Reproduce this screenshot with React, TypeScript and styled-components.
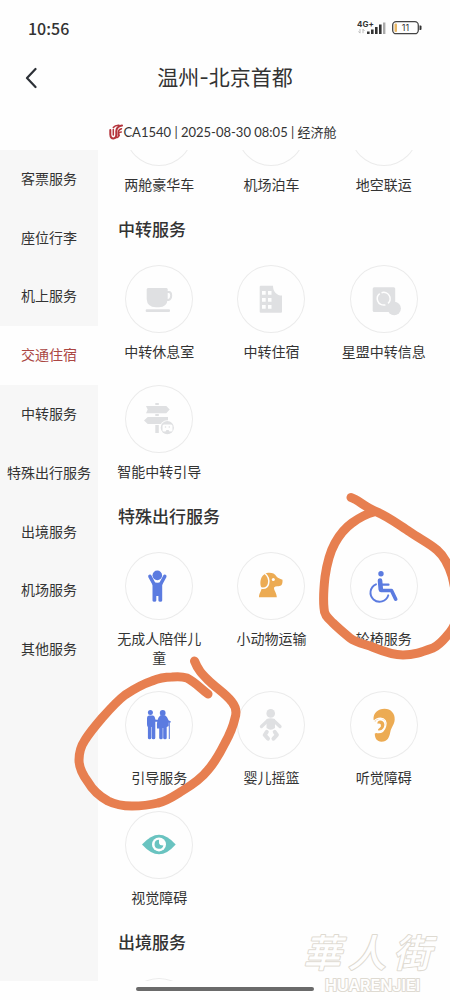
import React from "react";
import styled, { createGlobalStyle } from "styled-components";

const GlobalStyle = createGlobalStyle`
  *, *::before, *::after { box-sizing: border-box; }
  body {
    margin: 0;
    background: #fefefe;
    color: #333;
    font-family: "Noto Sans CJK SC", "Noto Sans", sans-serif;
  }
  button { font: inherit; color: inherit; background: none; border: 0; padding: 0; cursor: pointer; }
`;

const GREY = "#dfe0e2";
const BLUE = "#5b7be0";
const AMBER = "#ecab53";
const TEAL = "#69c3c0";

const Shell = styled.div`
  position: relative;
  display: flex;
  flex-direction: column;
  height: 100vh;
  overflow: hidden;
`;

const StatusBar = styled.div`
  display: flex;
  flex: none;
  align-items: center;
  justify-content: space-between;
  height: 56px;
  padding: 0 28px;
`;

const Clock = styled.time`
  font-size: 16px;
  line-height: 20px;
  font-weight: 500;
`;

const StatusIcons = styled.div`
  display: flex;
  align-items: center;
  gap: 6px;
`;

const TitleBar = styled.header`
  display: grid;
  flex: none;
  grid-template-columns: 44px 1fr 44px;
  align-items: center;
  height: 44px;
  padding: 0 9px;
`;

const BackButton = styled.button`
  display: flex;
  align-items: center;
  justify-content: center;
  height: 44px;
`;

const Title = styled.h1`
  margin: 0;
  font-family: Inter, "Noto Sans CJK SC", sans-serif;
  font-size: 21px;
  line-height: 28px;
  font-weight: 400;
  text-align: center;
`;

const FlightInfo = styled.p`
  display: flex;
  flex: none;
  align-items: center;
  justify-content: center;
  height: 50px;
  margin: 0;
  padding: 14px 4px 0 0;
  font-family: Lato, "Noto Sans CJK SC", sans-serif;
  font-size: 13px;
  line-height: 18px;
  white-space: pre;
`;

const Main = styled.main`
  display: flex;
  flex: 1;
  min-height: 0;
`;

const Sidebar = styled.nav`
  flex: none;
  width: 98px;
  background: #f7f7f7;
`;

const TabList = styled.div`
  display: flex;
  flex-direction: column;
  height: 529px;
`;

const Tab = styled.button<{ $active?: boolean }>`
  flex: 1;
  padding-bottom: 2px;
  font-size: 14px;
  line-height: 19px;
  white-space: nowrap;
  background: ${(p) => (p.$active ? "#fefefe" : "transparent")};
  color: ${(p) => (p.$active ? "#ab4643" : "#333")};
`;

const Viewport = styled.div`
  flex: 1;
  min-width: 0;
  overflow: hidden;
`;

const Scrolled = styled.div`
  margin-top: -52px;
`;

const SectionTitle = styled.h2`
  margin: 23px 20px 24px;
  font-size: 17px;
  line-height: 24px;
  font-weight: 500;
`;

const Grid = styled.div`
  display: grid;
  grid-template-columns: repeat(3, 1fr);
  row-gap: 24px;
  padding: 0 10px 0 5px;
`;

const Service = styled.button`
  display: flex;
  flex-direction: column;
  align-items: center;
  justify-content: flex-start;
  gap: 9px;
  padding: 0 10px;
`;

const Disc = styled.span`
  display: block;
  width: 68px;
  height: 68px;
  border-radius: 50%;
  box-shadow: inset 0 0 0 1px #ebebeb;
`;

const Label = styled.span`
  font-size: 14px;
  line-height: 19px;
  text-align: center;
`;

const BottomBar = styled.footer`
  display: flex;
  flex: none;
  justify-content: center;
  height: 19px;
  padding-top: 6px;
`;

const HomeHandle = styled.span`
  width: 178px;
  height: 4px;
  border-radius: 2px;
  background: #6a6a6a;
`;

const Scribbles = styled.svg`
  position: absolute;
  top: 0;
  left: 0;
  pointer-events: none;
`;

const Watermark = styled.svg`
  position: absolute;
  right: 5px;
  bottom: 4px;
  pointer-events: none;
`;

const icons = {
  cup: (
    <g fill={GREY}>
      <path d="M23 23H41.500Q42.700 23 42.700 24.500V34Q42 42.300 34 42.300H31Q22 42 21.700 34V24.500Q21.700 23 23 23Z" />
      <path d="M42 27H44Q46.200 27 46.200 30.500T43.500 35H41" fill="none" stroke={GREY} strokeWidth="2" />
      <rect x="20.700" y="44.300" width="24.300" height="2.800" rx="1" />
    </g>
  ),
  hotel: (
    <g fill={GREY}>
      <path d="M23.700 20.700H36C36 27 40 30.500 45 30.500V46.700Q45 47.700 44 47.700H23.700Q22.700 47.700 22.700 46.700V21.700Q22.700 20.700 23.700 20.700Z" />
      <path fill="#fefefe" d="M25 26h3.700v3.800H25zM31 26h3.500v3.800H31zM25 33h3.700v3.800H25zM31 33h3.500v3.800H31zM25 40h3.700v3.800H25zM31 40h3.500v3.800H31z" />
    </g>
  ),
  alliance: (
    <g fill={GREY}>
      <rect x="22.700" y="22.300" width="22.500" height="24.700" rx="1.500" />
      <circle cx="44.200" cy="43.500" r="6.700" />
      <circle cx="33.700" cy="33.700" r="6.400" fill="none" stroke="#fefefe" strokeWidth="1.500" strokeDasharray="17 3.100" transform="rotate(-110 33.700 33.700)" />
    </g>
  ),
  sign: (
    <g fill={GREY}>
      <path d="M30.300 18h3.500v2h-3.500zM30.300 29h3.500v2h-3.500zM30.300 40h3.500v8h-3.500z" />
      <path d="M21 21H41.300L44.700 24.600L41.300 28.200H21L22.700 24.600Z" />
      <path d="M22.700 32H43V39H22.700L19 35.500Z" />
      <circle cx="42.300" cy="42.700" r="7.500" fill="#fefefe" />
      <circle cx="42.300" cy="42.700" r="6.600" />
      <path fill="#fefefe" d="M39 39.500h7q1.500 0 1.500 1.500v4.500q0 1-1.500 1h-1.500l-1-1.600h-2l-1 1.600H39q-1.500 0-1.500-1V41q0-1.500 1.500-1.500z" />
      <circle cx="40.500" cy="42" r="0.800" />
      <circle cx="44.300" cy="42" r="0.800" />
    </g>
  ),
  child: (
    <g fill={BLUE}>
      <path d="M24.900 24.400L29 32M39.800 24.400L35.700 32" stroke={BLUE} strokeWidth="3.500" strokeLinecap="round" />
      <path d="M27.500 29.500Q32.400 32 37.200 29.500V48.500Q37.200 49.800 35.300 49.800T33.400 48.500V44H31.300V48.500Q31.300 49.800 29.400 49.800T27.500 48.500Z" />
      <circle cx="32.300" cy="23.400" r="4.800" />
    </g>
  ),
  dog: (
    <g fill={AMBER}>
      <path d="M22 45.300C22 41 24.500 39 24.700 36C22.500 33 22.800 25 27.500 22.300C31 20 37 20.300 39.500 24.500C41 26.500 44 27 45.500 27.800Q46 33.500 42.500 34C40 34.500 37.500 34 37 36C37 38.500 39.800 41 39.800 45.300Z" />
      <path d="M28 21.500C31 24 32.500 28 31.500 32C30.500 36 27 36.500 24 36" fill="none" stroke="#fefefe" strokeWidth="1.500" />
      <circle cx="36.300" cy="27.500" r="1.500" fill="#fefefe" />
    </g>
  ),
  wheelchair: (
    <g fill="none" stroke={BLUE} strokeLinecap="round" strokeLinejoin="round">
      <circle cx="31" cy="21.800" r="2.700" fill={BLUE} stroke="none" />
      <path d="M30 28.500L30.800 37.500" strokeWidth="4.600" />
      <path d="M31.500 32.700H38.500" strokeWidth="2.200" />
      <path d="M31 38.500H41.500L45.700 47.200" strokeWidth="3.600" />
      <path d="M26 32.300A9.100 9.100 0 1 0 38.300 43.300" strokeWidth="1.900" />
    </g>
  ),
  escort: (
    <g fill={BLUE}>
      <circle cx="25.400" cy="21.400" r="2.500" />
      <path d="M24 24.600H28Q30 25 30.300 28.600L33 29V30.800H30.300V47Q30.300 48.200 28.500 48.200T26.700 47V36H26.200V47Q26.200 48.200 24.600 48.200T22.900 47V36Q22 35.500 22 33V27Q22 25 24 24.600Z" />
      <circle cx="37.700" cy="22" r="2.900" />
      <path d="M35.500 24.200H40Q43 26 43.700 29.500L45.700 30.200V31.500H43.700V35L41.700 36V47Q41.700 48.200 40 48.200T38.200 47V37H37.700V47Q37.700 48.200 36 48.200T34.200 47V37.400H32Q31.300 27 35.500 24.200Z" />
      <path d="M44.300 31V48" stroke={BLUE} strokeWidth="1" />
    </g>
  ),
  baby: (
    <g fill={GREY}>
      <circle cx="33.700" cy="22.400" r="4.300" />
      <path d="M30.300 30L24.500 35.500M37.100 30L43 35.500" stroke={GREY} strokeWidth="3.300" strokeLinecap="round" />
      <path d="M29.500 28Q33.700 26.700 38 28V37Q33.700 40.500 29.500 37Z" />
      <path d="M29.800 40.800L27.700 44L31 47.700M37.700 40.800L39.900 44L36.500 47.700" fill="none" stroke={GREY} strokeWidth="4" strokeLinecap="round" strokeLinejoin="round" />
    </g>
  ),
  ear: (
    <g fill={AMBER}>
      <path d="M23.500 28.500C23 22 28 17.700 34.500 17.700C41 17.700 45 22.500 44.700 28.500C44.500 33.500 41.500 35.500 40.300 41C39.300 46.500 37.500 50.700 31.500 50.700C27 50.500 24.700 47.500 24.800 42.500L28.500 41.500C32 41.500 35 39 35.500 35C36.500 30 33 27.500 30 27.800C27 28 25.500 30 25 31Z" />
      <path d="M24 30.500Q26 27.200 30.500 27.200C35 27.300 37 31 35.700 35C34.500 39.500 32 42 27.500 41.700M26.500 32.500Q30 30.500 31 33Q32 35.500 28.700 37.500" fill="none" stroke="#fefefe" strokeWidth="1.200" strokeLinecap="round" />
      <path d="M27.500 31Q30 28.500 33 30.500Q35.500 33 33.500 37Q31.500 40 28.200 39.500Q27.300 38 29.500 37Q31.700 35.500 30.800 33.500Q29.800 32 27.500 32.700Z" />
    </g>
  ),
  eye: (
    <g fill={TEAL}>
      <path d="M17 33.400Q26 23.700 34 23.700T50.700 33.400Q42 43.300 34 43.300T17 33.400Z" />
      <circle cx="34" cy="33.400" r="7" fill="#fefefe" />
      <path d="M34 28.800A4.500 4.500 0 1 0 38.400 34.500Q34.300 34.500 34 32Z" />
    </g>
  ),
};

type IconName = keyof typeof icons;
type Item = { label: string; icon?: IconName };

const sections: { title?: string; items: Item[] }[] = [
  { items: [{ label: "两舱豪华车" }, { label: "机场泊车" }, { label: "地空联运" }] },
  {
    title: "中转服务",
    items: [
      { label: "中转休息室", icon: "cup" },
      { label: "中转住宿", icon: "hotel" },
      { label: "星盟中转信息", icon: "alliance" },
      { label: "智能中转引导", icon: "sign" },
    ],
  },
  {
    title: "特殊出行服务",
    items: [
      { label: "无成人陪伴儿童", icon: "child" },
      { label: "小动物运输", icon: "dog" },
      { label: "轮椅服务", icon: "wheelchair" },
      { label: "引导服务", icon: "escort" },
      { label: "婴儿摇篮", icon: "baby" },
      { label: "听觉障碍", icon: "ear" },
      { label: "视觉障碍", icon: "eye" },
    ],
  },
  { title: "出境服务", items: [{ label: "" }] },
];

const tabs = ["客票服务", "座位行李", "机上服务", "交通住宿", "中转服务", "特殊出行服务", "出境服务", "机场服务", "其他服务"];

function Signal() {
  return (
    <svg width="29" height="18" viewBox="0 0 29 18" aria-hidden="true">
      <text x="0" y="8" fontSize="8" fontWeight="700" fontFamily="Inter, sans-serif" fill="#333">4G+</text>
      <path d="M3 10v4M1.500 12.500L3 14.200M6 14.200v-4M6 10.200L7.500 12" stroke="#bbb" strokeWidth="1" fill="none" />
      <path d="M10 12.500h2.600v2.500H10zM14 10.500h2.600V15H14zM18 8h2.600v7H18zM22 5.500h2.600V15H22z" fill="#333" />
      <path d="M26 3.500h2.400V15H26z" fill="#aaa" />
    </svg>
  );
}

function Battery() {
  return (
    <svg width="30" height="14" viewBox="0 0 30 14" aria-hidden="true">
      <rect x="0.700" y="0.700" width="25.600" height="12" rx="3.500" fill="none" stroke="#444" strokeWidth="1.300" />
      <rect x="2.500" y="2.500" width="2.500" height="8.500" rx="1" fill="#e9b765" />
      <path d="M27.500 4.500h1q1 0 1 1v2.500q0 1-1 1h-1z" fill="#333" />
      <text x="13.500" y="10" fontSize="9" textAnchor="middle" fontFamily="Inter, sans-serif" fill="#333">11</text>
    </svg>
  );
}

function Phoenix() {
  return (
    <svg width="14" height="16" viewBox="0 0 14 16" aria-hidden="true">
      <g fill="none" stroke="#b5343c" strokeLinecap="round">
        <path d="M1.300 6V10.500Q1.500 14.500 4.500 14.500Q7 14.300 7.300 11V7Q7.500 2.500 13 1.500" strokeWidth="2" />
        <path d="M4.300 5.500V11M4.300 3.500Q6 1 10 1.200M9.300 11.500V8Q9.500 5.500 12.500 4.700M9.500 9.500Q10.500 8 12.300 8M6 13.500Q9.500 14 10.300 11" strokeWidth="1.500" />
      </g>
    </svg>
  );
}

export default function App() {
  return (
    <Shell>
      <GlobalStyle />
      <StatusBar>
        <Clock>10:56</Clock>
        <StatusIcons>
          <Signal />
          <Battery />
        </StatusIcons>
      </StatusBar>
      <TitleBar>
        <BackButton type="button" aria-label="返回">
          <svg width="12" height="22" viewBox="0 0 12 22" aria-hidden="true">
            <path d="M10.500 2L2 11L10.500 20" fill="none" stroke="#2c3036" strokeWidth="2.200" strokeLinecap="round" strokeLinejoin="round" />
          </svg>
        </BackButton>
        <Title>温州-北京首都</Title>
      </TitleBar>
      <FlightInfo>
        <Phoenix />
        <span>CA1540 | 2025-08-30 08:05 | 经济舱</span>
      </FlightInfo>
      <Main>
        <Sidebar>
          <TabList>
            {tabs.map((name) => (
              <Tab key={name} type="button" $active={name === "交通住宿"}>{name}</Tab>
            ))}
          </TabList>
        </Sidebar>
        <Viewport>
          <Scrolled>
            {sections.map((section, index) => (
              <section key={index}>
                {section.title && <SectionTitle>{section.title}</SectionTitle>}
                <Grid>
                  {section.items.map((item, i) => (
                    <Service key={i} type="button">
                      <Disc>
                        {item.icon && (
                          <svg width="68" height="68" viewBox="0 0 68 68" aria-hidden="true">{icons[item.icon]}</svg>
                        )}
                      </Disc>
                      <Label>{item.label}</Label>
                    </Service>
                  ))}
                </Grid>
              </section>
            ))}
          </Scrolled>
        </Viewport>
      </Main>
      <BottomBar>
        <HomeHandle />
      </BottomBar>
      <Scribbles width="450" height="1000" viewBox="0 0 450 1000" aria-hidden="true">
        <g fill="none" stroke="#e77f50" strokeWidth="9" strokeLinecap="round" strokeLinejoin="round">
          <path d="M351 497.500C359 500 364 507 377 512C389 517 399 525 410 532C420 539 429 543 437 550C444 556 449 566 452 576C458 600 460 621 450 632C446 637 441 644 433 648C422 652 414 655 403 655C391 655 380 650 370 646C360 643 355 642 350 638C344 633 338 628 333 623C328 618 324 615 324 608C323 598 324 586 325 577C327 563 330 552 335 543C340 534 345 528 352 523C359 518 366 514 374 512" />
          <path d="M194.500 661C198 670 202 674 208 680C216 688 226 694 232 702C236 707 237 712 235 718C233 727 230 734 225 743C220 753 215 762 208 770C201 779 192 785 182 791C174 796 167 801 158 803C150 805 141 806 132 806C123 806 114 804 108 801C99 796 92 789 88 782C82 774 79 767 79 760C79 752 81 746 85 740C90 732 96 725 102 718C110 709 117 701 125 695C134 689 143 684 152 681C159 678 166 677 172 677Q181 676 187 678C195 682 200 688 208 694" />
        </g>
      </Scribbles>
      <Watermark width="145" height="84" viewBox="0 0 145 84" role="img">
        <g fill="#fefefe" stroke="#dedad1" strokeWidth="2" strokeLinejoin="round" paintOrder="stroke">
          <g fontWeight="500" fontStyle="italic">
            <text x="3" y="55" fontSize="38">華</text>
            <text x="48" y="55" fontSize="38">人</text>
            <text x="93" y="55" fontSize="38">街</text>
          </g>
          <text x="25" y="79" fontSize="16" fontWeight="600" fontFamily="Inter, sans-serif">HUARENJIEI</text>
        </g>
      </Watermark>
    </Shell>
  );
}
